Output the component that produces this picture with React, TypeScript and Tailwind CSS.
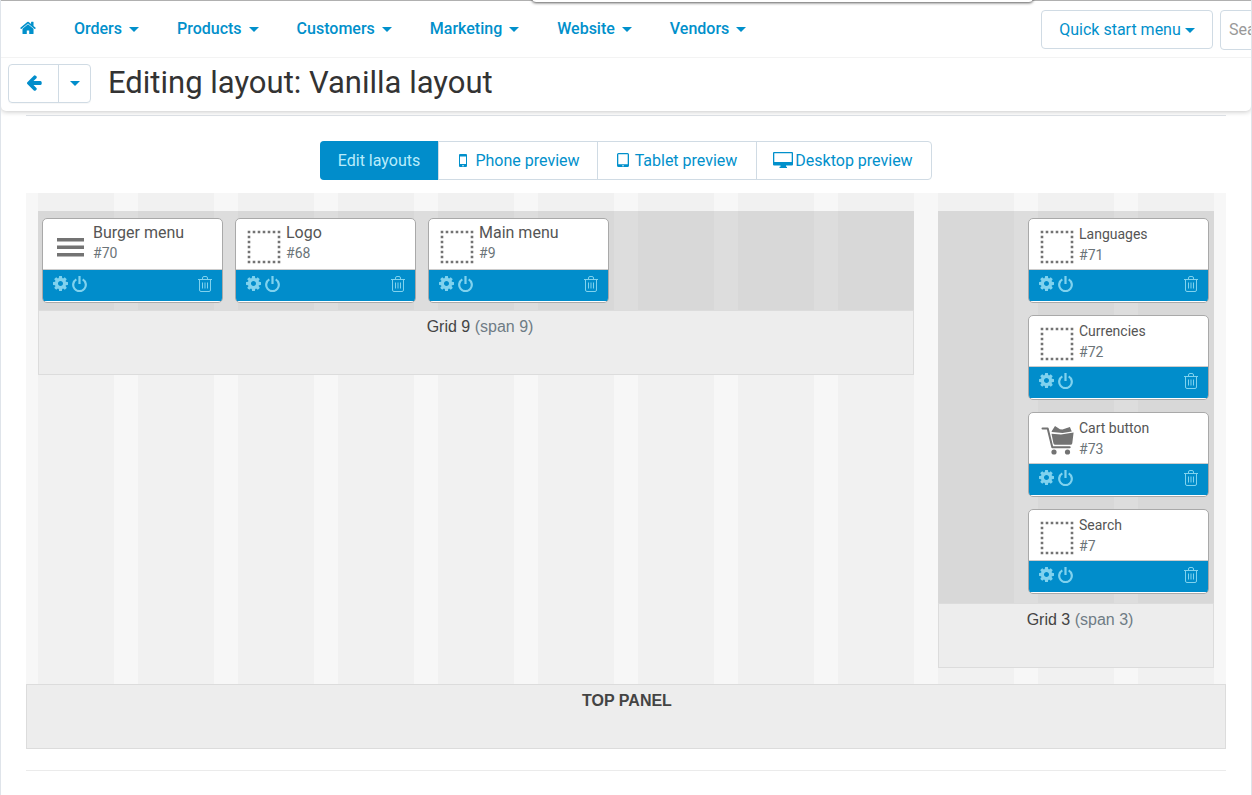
import React from "react";

type BlockIcon = "burger" | "placeholder" | "cart";

interface Block {
  name: string;
  id: number;
  icon: BlockIcon;
}

const navItems = ["Orders", "Products", "Customers", "Marketing", "Website", "Vendors"];

const mainBlocks: Block[] = [
  { name: "Burger menu", id: 70, icon: "burger" },
  { name: "Logo", id: 68, icon: "placeholder" },
  { name: "Main menu", id: 9, icon: "placeholder" },
];

const sideBlocks: Block[] = [
  { name: "Languages", id: 71, icon: "placeholder" },
  { name: "Currencies", id: 72, icon: "placeholder" },
  { name: "Cart button", id: 73, icon: "cart" },
  { name: "Search", id: 7, icon: "placeholder" },
];

function Caret() {
  return (
    <svg viewBox="0 0 10 5" className="h-[5px] w-[10px] shrink-0" fill="currentColor" aria-hidden="true">
      <path d="M0 0h10L5 5z" />
    </svg>
  );
}

function HomeIcon() {
  return (
    <svg viewBox="60 200 1670 1400" className="h-[14px] w-4" fill="currentColor" aria-hidden="true">
      <path d="M1472 992v480q0 26-19 45t-45 19h-384v-384h-256v384h-384q-26 0-45-19t-19-45v-480q0-1 .5-3t.5-3l575-474 575 474q1 2 1 6zm223-69l-62 74q-8 9-21 11h-3q-13 0-21-7l-692-577-692 577q-12 8-24 7-13-2-21-11l-62-74q-8-10-7-23.5t11-21.5l719-599q32-26 76-26t76 26l244 204v-195q0-14 9-23t23-9h192q14 0 23 9t9 23v408l219 182q10 8 11 21.5t-7 23.5z" />
    </svg>
  );
}

function ArrowLeftIcon() {
  return (
    <svg viewBox="120 220 1550 1600" className="h-4 w-4" fill="currentColor" aria-hidden="true">
      <path d="M1664 960v128q0 53-32.500 90.500t-84.500 37.500h-704l293 294q38 36 38 90t-38 90l-75 76q-37 37-90 37-52 0-91-37l-651-652q-37-37-37-90 0-52 37-91l651-650q38-38 91-38 52 0 90 38l75 74q38 38 38 91t-38 91l-293 293h704q52 0 84.500 37.500t32.500 90.500z" />
    </svg>
  );
}

function GearIcon() {
  return (
    <svg viewBox="128 128 1536 1536" className="h-[15px] w-[15px]" fill="currentColor" aria-hidden="true">
      <path d="M1152 896q0-106-75-181t-181-75-181 75-75 181 75 181 181 75 181-75 75-181zm512-109v222q0 12-8 23t-20 13l-185 28q-19 54-39 91 35 50 107 138 10 12 10 25t-9 23q-27 37-99 108t-94 71q-12 0-26-9l-138-108q-44 23-91 38-16 136-29 186-7 28-36 28h-222q-14 0-24.500-8.500t-11.500-21.500l-28-184q-49-16-90-37l-141 107q-10 9-25 9-14 0-25-11-126-114-165-168-7-10-7-23 0-12 8-23 15-21 51-66.500t54-70.500q-27-50-41-99l-183-27q-13-2-21-12.500t-8-23.500v-222q0-12 8-23t19-13l186-28q14-46 39-92-40-57-107-138-10-12-10-24 0-10 9-23 26-36 98.500-107.500t94.500-71.500q13 0 26 10l138 107q44-23 91-38 16-136 29-186 7-28 36-28h222q14 0 24.500 8.500t11.500 21.500l28 184q49 16 90 37l142-107q9-9 24-9 13 0 25 10 129 119 165 170 7 8 7 22 0 12-8 23-15 21-51 66.500t-54 70.500q26 50 41 98l183 28q13 2 21 12.500t8 23.500z" />
    </svg>
  );
}

function PowerIcon() {
  return (
    <svg viewBox="0 0 15 16" className="h-4 w-[15px]" fill="none" stroke="currentColor" strokeWidth="2.200" aria-hidden="true">
      <path d="M4.300 3.400a6.300 6.300 0 1 0 6.400 0M7.500 0v8" />
    </svg>
  );
}

function TrashIcon() {
  return (
    <svg viewBox="0 0 14 16" className="h-4 w-[14px]" fill="none" stroke="currentColor" aria-hidden="true">
      <path d="M0 3.500h14M4.500 3.200V2q0-1.500 1.500-1.500h2q1.500 0 1.500 1.500v1.200M1.500 3.500v10.500q0 1.500 1.500 1.500h8q1.500 0 1.500-1.500V3.500M4.500 6.500v6M7 6.500v6M9.500 6.500v6" />
    </svg>
  );
}

function PhoneIcon() {
  return (
    <svg viewBox="0 0 8 13" className="mr-2 h-[13px] w-2" fill="currentColor" fillRule="evenodd" aria-hidden="true">
      <path d="M1 0h6q1 0 1 1v11q0 1-1 1H1q-1 0-1-1V1q0-1 1-1zM1 2.500v7.500h6V2.500zM4 10.900a.7.7 0 1 0 .01 0z" />
    </svg>
  );
}

function TabletIcon() {
  return (
    <svg viewBox="0 0 12 14" className="mr-[6px] mb-[2px] h-[14px] w-3" fill="currentColor" fillRule="evenodd" aria-hidden="true">
      <path d="M1.500 0h9Q12 0 12 1.500v11q0 1.500-1.500 1.500h-9Q0 14 0 12.500v-11Q0 0 1.500 0zM1.300 1.300v9.900h9.400V1.300zM6 12a.7.7 0 1 0 .01 0z" />
    </svg>
  );
}

function DesktopIcon() {
  return (
    <svg viewBox="0 0 20 16" className="mr-[2px] mb-[2px] h-4 w-5" fill="currentColor" fillRule="evenodd" aria-hidden="true">
      <path d="M1 0h18q1 0 1 1v11.500q0 1-1 1h-6v1.200h1V16H6.500v-1.300h1v-1.200H1q-1 0-1-1V1q0-1 1-1zM1.300 1.300V10h17.400V1.300z" />
    </svg>
  );
}

function BlockPicture({ icon }: { icon: BlockIcon }) {
  if (icon === "burger") {
    return (
      <svg viewBox="0 0 34 34" className="h-[34px] w-[34px]" fill="#737373" aria-hidden="true">
        <path d="M3 8h27v3.500H3zM3 15.500h27V19H3zM3 23h27v3.500H3z" />
      </svg>
    );
  }
  if (icon === "cart") {
    return (
      <svg viewBox="0 0 34 34" className="h-[34px] w-[34px]" fill="#737373" aria-hidden="true">
        <path d="M2.500 4.500h5.200l4.600 18.800h17.400" fill="none" stroke="#737373" strokeWidth="2" strokeLinejoin="round" strokeLinecap="round" />
        <path d="M11.500 7.500l3.500-5.500 5 3.200 2.400.3 3-1 4.500-1.500 1.900 4.500-9.300 1.500-10.500-.9z" />
        <path d="M11.500 9.800l9.500.8L33.600 8.600l-1.300 10.700q-.3 1.500-1.800 1.500H15.200q-1.400 0-1.800-1.500z" />
        <circle cx="14" cy="28" r="2.600" />
        <circle cx="27.500" cy="28" r="2.600" />
      </svg>
    );
  }
  return (
    <svg viewBox="0 0 34 34" className="h-[34px] w-[34px]" fill="none" stroke="#737373" strokeWidth="2.600" aria-hidden="true">
      <path d="M.7 2h32.600M.7 32h32.600M2 .7v32.600M32 .7v32.600" strokeDasharray="2.600 2.400" />
    </svg>
  );
}

function BlockCard({ block, compact = false }: { block: Block; compact?: boolean }) {
  return (
    <article className="w-[181px] overflow-hidden rounded-[5px] border border-[#a9a9a9] bg-white pb-px">
      <div className="flex h-[51px] border-b border-[#ccc] pl-[11px]">
        <div className="mr-[5px] pt-[11px]">
          <BlockPicture icon={block.icon} />
        </div>
        <div className={compact ? "pt-[5px] leading-[21px] text-[#555]" : "pt-[4px] leading-[21px] text-[#555]"}>
          <h3 className={compact ? "text-[14px]" : "text-[16px] leading-5"}>{block.name}</h3>
          <p className="text-[14px] text-[#6b7478]">#{block.id}</p>
        </div>
      </div>
      <div className="flex h-[31px] items-center gap-1 bg-[#018dcb] px-[10px] pb-[4px] text-[#80d2ee]">
        <button type="button" aria-label={`${block.name} settings`}>
          <GearIcon />
        </button>
        <button type="button" aria-label={`Toggle ${block.name}`}>
          <PowerIcon />
        </button>
        <button type="button" className="ml-auto" aria-label={`Delete ${block.name}`}>
          <TrashIcon />
        </button>
      </div>
    </article>
  );
}

function GridFooter({ name, span }: { name: string; span: number }) {
  return (
    <footer className="h-[65px] border border-[#dcdcdc] bg-[#ededed] pt-[5px] pl-2 text-center font-['Liberation_Sans',sans-serif] text-[16px] leading-[22px] text-[#444]">
      {name} <span className="text-[#6f7c85]">(span {span})</span>
    </footer>
  );
}

export default function App() {
  return (
    <div className="min-h-screen overflow-hidden border-x border-[#dfe4ea] bg-white font-[Roboto,sans-serif] text-[16px] text-[#333]">
      <header className="relative overflow-visible rounded-b-[5px] border-t border-[#b0b0b0] bg-white shadow-[0_1px_5px_rgba(0,0,0,0.22)]">
        <div className="absolute -top-[6px] left-[531px] h-[7px] w-[501px] rounded-b-[4px] bg-white shadow-[0_1px_3px_rgba(0,0,0,0.65)]" />
        <div className="flex h-[57px] border-b border-[#f3f3f3]">
          <nav className="flex h-14 items-center pl-[19px] font-medium text-[#0190cb]">
            <a href="#home" aria-label="Home" className="mr-[38px] pb-[2px]">
              <HomeIcon />
            </a>
            <ul className="flex items-center gap-[38px]">
              {navItems.map((item) => (
                <li key={item}>
                  <a href={`#${item.toLowerCase()}`} className="flex items-center gap-[7px] leading-6">
                    {item}
                    <Caret />
                  </a>
                </li>
              ))}
            </ul>
          </nav>
          <div className="-mr-[150px] ml-auto flex shrink-0 items-start gap-[7px] pt-[9px]">
            <button type="button" className="flex h-[39px] w-[172px] items-center justify-center gap-1 rounded-[4px] border border-[#d0dbe4] text-[#0190cb]">
              Quick start menu
              <span className="pt-[2px]">
                <Caret />
              </span>
            </button>
            <input
              type="search"
              aria-label="Search"
              placeholder="Search"
              className="h-10 w-[181px] rounded-[4px] border border-[#d0dbe4] px-2 pb-[2px] placeholder:text-[#999]"
            />
          </div>
        </div>
        <div className="flex h-[53px] items-start pt-[6px] pl-[7px]">
          <div className="flex h-[39px] shrink-0 rounded-[4px] border border-[#d0dbe4] text-[#018dcb] shadow-[0_1px_1px_rgba(0,0,0,0.03)]">
            <button type="button" aria-label="Back" className="flex w-[50px] items-center justify-center border-r border-[#d0dbe4] pb-[2px]">
              <ArrowLeftIcon />
            </button>
            <button type="button" aria-label="More layouts" className="flex w-[31px] items-center justify-center">
              <Caret />
            </button>
          </div>
          <h1 className="ml-[17px] text-[31px] leading-[38px]">Editing layout: Vanilla layout</h1>
        </div>
      </header>

      <main className="px-[25px] pt-1">
        <hr className="border-[#dfe3e8]" />

        <div className="mt-[25px] flex justify-center text-[#0190cb]">
          <div className="flex h-[39px] divide-x divide-[#d0dbe4] rounded-[4px] border border-[#d0dbe4]">
            <button type="button" className="-my-px -ml-px w-[119px] rounded-l-[4px] bg-[#018dcb] text-[#b9ecfb]">
              Edit layouts
            </button>
            <button type="button" className="flex w-[159px] items-center justify-center pl-[3px]">
              <PhoneIcon />
              Phone preview
            </button>
            <button type="button" className="flex w-[159px] items-center justify-center">
              <TabletIcon />
              Tablet preview
            </button>
            <button type="button" className="flex w-[174px] items-center justify-center pr-[2px]">
              <DesktopIcon />
              Desktop preview
            </button>
          </div>
        </div>

        <section className="mt-[13px]">
          <div className="grid grid-cols-12 items-start gap-x-6 bg-[linear-gradient(90deg,#f7f7f7_12%,#f1f1f1_12%,#f1f1f1_88%,#f7f7f7_88%)] bg-[length:calc(100%/12)_100%] px-3 pt-[18px] pb-4">
            <section className="col-span-9">
              <div className="flex flex-wrap gap-3 bg-black/10 px-1 pt-[7px] pb-[7px]">
                {mainBlocks.map((block) => (
                  <BlockCard key={block.id} block={block} />
                ))}
              </div>
              <GridFooter name="Grid 9" span={9} />
            </section>
            <section className="col-span-3">
              <div className="flex flex-col items-end gap-3 bg-black/10 pt-[7px] pr-[5px] pb-[9px]">
                {sideBlocks.map((block) => (
                  <BlockCard key={block.id} block={block} compact />
                ))}
              </div>
              <GridFooter name="Grid 3" span={3} />
            </section>
          </div>
          <h2 className="h-[65px] border border-[#dcdcdc] bg-[#ededed] pt-[5px] pl-[2px] text-center font-['Liberation_Sans',sans-serif] text-[16px] leading-[22px] font-bold text-[#444]">
            TOP PANEL
          </h2>
        </section>

        <hr className="mt-[21px] border-[#ebebeb]" />
      </main>
    </div>
  );
}
